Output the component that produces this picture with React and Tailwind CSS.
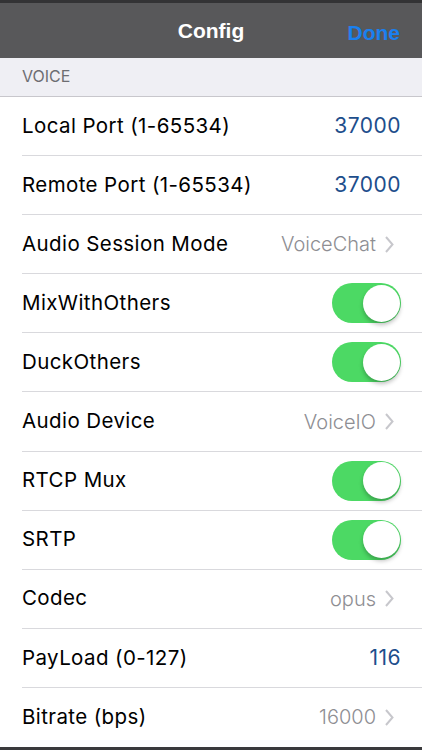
import React from "react";

const rows = [
  { label: "Local Port (1-65534)", value: "37000", kind: "blue" },
  { label: "Remote Port (1-65534)", value: "37000", kind: "blue" },
  { label: "Audio Session Mode", value: "VoiceChat", kind: "nav" },
  { label: "MixWithOthers", kind: "toggle" },
  { label: "DuckOthers", kind: "toggle" },
  { label: "Audio Device", value: "VoiceIO", kind: "nav" },
  { label: "RTCP Mux", kind: "toggle" },
  { label: "SRTP", kind: "toggle" },
  { label: "Codec", value: "opus", kind: "nav" },
  { label: "PayLoad (0-127)", value: "116", kind: "blue" },
  { label: "Bitrate (bps)", value: "16000", kind: "nav" },
];

function Toggle() {
  return (
    <div className="w-[69px] h-[40px] rounded-full bg-[#4cd964] relative shrink-0">
      <div className="absolute right-[1.5px] top-[1.5px] w-[37px] h-[37px] rounded-full bg-white shadow-[0_3px_4px_rgba(0,0,0,0.25)]" />
    </div>
  );
}

function Chevron() {
  return (
    <svg width="9" height="17" viewBox="0 0 9 17" className="ml-[9px] mr-[-2px] shrink-0">
      <path d="M1 1 L7.5 8.5 L1 16" fill="none" stroke="#c7c7cc" strokeWidth="2" />
    </svg>
  );
}

function Row({ row, last }) {
  return (
    <div className="h-[59.1px] pl-[22px] bg-white shrink-0">
      <div
        className={`h-full flex items-center justify-between ${
          last ? "" : "border-b border-[#d9d9dd]"
        } ${row.kind === "nav" ? "pr-[30px]" : "pr-[21px]"}`}
      >
        <span className="text-[20.5px] tracking-[0.4px] text-black">{row.label}</span>
        {row.kind === "toggle" && <Toggle />}
        {row.kind === "blue" && (
          <span className="text-[21px] tracking-[0.5px] text-[#1d4e8c]">{row.value}</span>
        )}
        {row.kind === "nav" && (
          <span className="flex items-center text-[20px] font-light text-[#8e8e93]">
            {row.value}
            <Chevron />
          </span>
        )}
      </div>
    </div>
  );
}

export default function App() {
  return (
    <div className="w-[422px] h-[750px] overflow-hidden bg-white font-['Inter','Liberation_Sans',sans-serif] flex flex-col">
      <div className="h-[58px] bg-[#58585a] border-t-[3px] border-[#333335] flex items-center justify-center relative shrink-0 font-['Liberation_Sans',Arial,sans-serif]">
        <span className="text-white text-[21px] font-semibold">Config</span>
        <span className="absolute right-[22px] top-[14px] text-[21px] font-bold text-[#1a80f0]">Done</span>
      </div>
      <div className="h-[39px] bg-[#efeff4] border-b border-[#c8c7cc] flex items-end pl-[22px] pb-[8px] shrink-0">
        <span className="text-[16px] text-[#6d6d72]">VOICE</span>
      </div>
      {rows.map((r, i) => (
        <Row key={i} row={r} last={i === rows.length - 1} />
      ))}
      <div className="flex-1 bg-[#3a3a3c]" />
    </div>
  );
}
